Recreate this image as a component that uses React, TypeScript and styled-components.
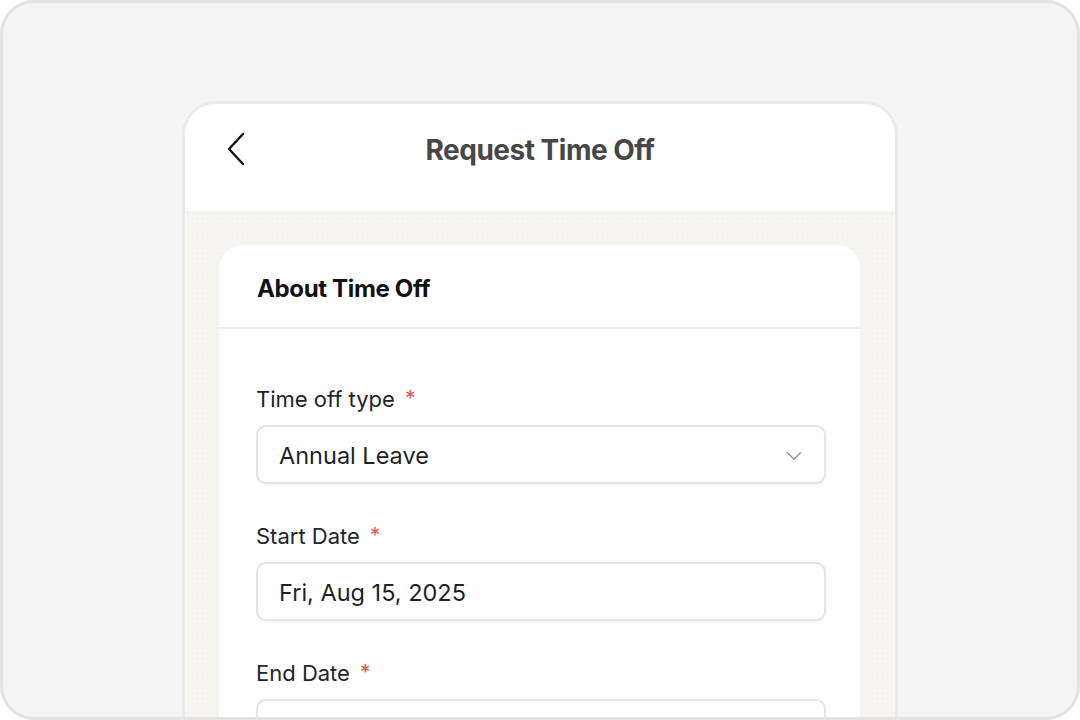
import { createGlobalStyle, styled } from "styled-components";

const GlobalStyle = createGlobalStyle`
  html, body {
    margin: 0;
    padding: 0;
    background: #ffffff;
    font-family: Inter, "Noto Sans", sans-serif;
  }
  * {
    box-sizing: border-box;
  }
`;

interface FieldProps {
  label: string;
  value?: string;
  select?: boolean;
}

function Field({ label, value, select }: FieldProps) {
  return (
    <FieldWrap>
      <Label>
        {label}
        <Required>*</Required>
      </Label>
      <InputBox>
        <InputText>{value}</InputText>
        {select && (
          <svg width="16" height="10" viewBox="0 0 16 10" fill="none">
            <path d="M1.5 1.8L8 8.2L14.5 1.8" stroke="#9a9a9a" strokeWidth="1.6" strokeLinecap="round" strokeLinejoin="round" />
          </svg>
        )}
      </InputBox>
    </FieldWrap>
  );
}

export default function App() {
  return (
    <>
      <GlobalStyle />
      <Frame>
        <Phone>
          <Header>
            <BackButton aria-label="Back">
              <svg width="20" height="34" viewBox="0 0 20 34" fill="none">
                <path d="M17 2L3 17L17 32" stroke="#111" strokeWidth="2.4" strokeLinecap="round" strokeLinejoin="round" />
              </svg>
            </BackButton>
            <Title>Request Time Off</Title>
          </Header>
          <Body>
            <Card>
              <CardHeader>About Time Off</CardHeader>
              <CardBody>
                <Field label="Time off type" value="Annual Leave" select />
                <Field label="Start Date" value="Fri, Aug 15, 2025" />
                <Field label="End Date" value="" />
              </CardBody>
            </Card>
          </Body>
        </Phone>
      </Frame>
    </>
  );
}

const Frame = styled.div`
  width: 1080px;
  height: 720px;
  border: 3px solid #e3e3e3;
  border-radius: 34px;
  background: #f4f4f4;
  overflow: hidden;
  display: flex;
  justify-content: center;
  padding-top: 98px;
`;

const Phone = styled.div`
  width: 716px;
  height: 660px;
  flex-shrink: 0;
  border: 3px solid #ebebeb;
  border-radius: 34px;
  overflow: hidden;
  background: #f6f5f2;
  display: flex;
  flex-direction: column;
`;

const Header = styled.div`
  position: relative;
  height: 107px;
  background: #ffffff;
  display: flex;
  align-items: center;
  justify-content: center;
  flex-shrink: 0;
`;

const BackButton = styled.button`
  position: absolute;
  left: 41px;
  top: 28px;
  border: none;
  background: none;
  padding: 0;
  display: flex;
`;

const Title = styled.h1`
  margin: 0;
  font-size: 28px;
  font-weight: 700;
  letter-spacing: -0.5px;
  color: #474747;
  transform: translateY(-8px);
`;

const Body = styled.div`
  flex: 1;
  padding: 34px 35px 0 34px;
  background-color: #f6f5f2;
  background-image: radial-gradient(#efede8 0.6px, transparent 0.8px);
  background-size: 5px 5px;
`;

const Card = styled.div`
  background: #ffffff;
  border-radius: 24px;
  height: 100%;
`;

const CardHeader = styled.div`
  height: 84px;
  display: flex;
  align-items: center;
  padding: 4px 38px 0;
  font-size: 24px;
  font-weight: 700;
  letter-spacing: -0.35px;
  color: #111111;
  border-bottom: 2px solid #efefef;
`;

const CardBody = styled.div`
  padding: 56px 34px 0 37px;
  display: flex;
  flex-direction: column;
  gap: 38px;
`;

const FieldWrap = styled.div`
  display: flex;
  flex-direction: column;
  gap: 12px;
`;

const Label = styled.div`
  font-size: 22px;
  line-height: 28px;
  color: #23232b;
  display: flex;
  gap: 10px;
`;

const Required = styled.span`
  color: #e5574c;
  font-size: 21px;
`;

const InputBox = styled.div`
  height: 59px;
  border: 2px solid #e4e4e4;
  border-radius: 10px;
  background: #ffffff;
  box-shadow: 0 1px 2px rgba(0, 0, 0, 0.05);
  display: flex;
  align-items: center;
  justify-content: space-between;
  padding: 2px 22px 0 21px;
`;

const InputText = styled.span`
  font-size: 23.5px;
  color: #1f1f27;
`;
